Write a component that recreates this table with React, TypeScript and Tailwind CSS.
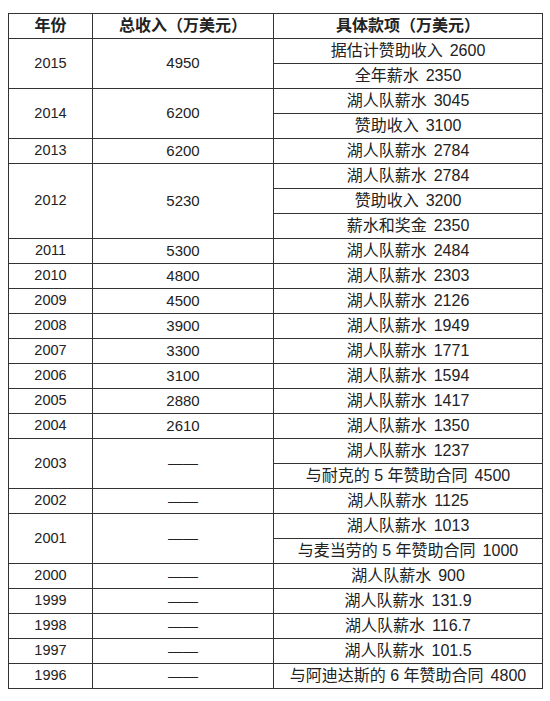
import React from 'react';

interface YearRow {
  year: string;
  total: string;
  items: string[];
}

const rows: YearRow[] = [
  { year: '2015', total: '4950', items: ['据估计赞助收入 2600', '全年薪水 2350'] },
  { year: '2014', total: '6200', items: ['湖人队薪水 3045', '赞助收入 3100'] },
  { year: '2013', total: '6200', items: ['湖人队薪水 2784'] },
  { year: '2012', total: '5230', items: ['湖人队薪水 2784', '赞助收入 3200', '薪水和奖金 2350'] },
  { year: '2011', total: '5300', items: ['湖人队薪水 2484'] },
  { year: '2010', total: '4800', items: ['湖人队薪水 2303'] },
  { year: '2009', total: '4500', items: ['湖人队薪水 2126'] },
  { year: '2008', total: '3900', items: ['湖人队薪水 1949'] },
  { year: '2007', total: '3300', items: ['湖人队薪水 1771'] },
  { year: '2006', total: '3100', items: ['湖人队薪水 1594'] },
  { year: '2005', total: '2880', items: ['湖人队薪水 1417'] },
  { year: '2004', total: '2610', items: ['湖人队薪水 1350'] },
  { year: '2003', total: '——', items: ['湖人队薪水 1237', '与耐克的 5 年赞助合同 4500'] },
  { year: '2002', total: '——', items: ['湖人队薪水 1125'] },
  { year: '2001', total: '——', items: ['湖人队薪水 1013', '与麦当劳的 5 年赞助合同 1000'] },
  { year: '2000', total: '——', items: ['湖人队薪水 900'] },
  { year: '1999', total: '——', items: ['湖人队薪水 131.9'] },
  { year: '1998', total: '——', items: ['湖人队薪水 116.7'] },
  { year: '1997', total: '——', items: ['湖人队薪水 101.5'] },
  { year: '1996', total: '——', items: ['与阿迪达斯的 6 年赞助合同 4800'] },
];

const cell = 'border border-[#333] text-center align-middle p-0';

// split "label number" so the number gets a slightly wider gap like the source
const Item: React.FC<{ text: string }> = ({ text }) => {
  const idx = text.lastIndexOf(' ');
  return (
    <>
      {text.slice(0, idx)}
      <span className="ml-[7px]">{text.slice(idx + 1)}</span>
    </>
  );
};

const App: React.FC = () => {
  return (
    <div
      className="w-[550px] h-[701px] bg-white pt-[13px] pl-[8px] text-[#222]"
      style={{ fontFamily: '"Liberation Sans", "Noto Sans CJK SC", sans-serif' }}
    >
      <table className="border-collapse table-fixed w-[534px] border-[1.5px] border-[#333]">
        <colgroup>
          <col className="w-[84px]" />
          <col className="w-[181px]" />
          <col className="w-[269px]" />
        </colgroup>
        <thead>
          <tr className="h-[25px]">
            <th className={`${cell} text-[16px] font-bold`}>年份</th>
            <th className={`${cell} text-[16px] font-bold`}>总收入（万美元）</th>
            <th className={`${cell} text-[16px] font-bold`}>具体款项（万美元）</th>
          </tr>
        </thead>
        <tbody>
          {rows.map((r) =>
            r.items.map((item, i) => (
              <tr key={r.year + i} className="h-[25px]">
                {i === 0 && (
                  <>
                    <td rowSpan={r.items.length} className={`${cell} text-[14.5px]`}>
                      {r.year}
                    </td>
                    <td rowSpan={r.items.length} className={`${cell} text-[15px]`}>
                      {r.total}
                    </td>
                  </>
                )}
                <td className={`${cell} text-[16px] leading-none`}>
                  <Item text={item} />
                </td>
              </tr>
            ))
          )}
        </tbody>
      </table>
    </div>
  );
};

export default App;
